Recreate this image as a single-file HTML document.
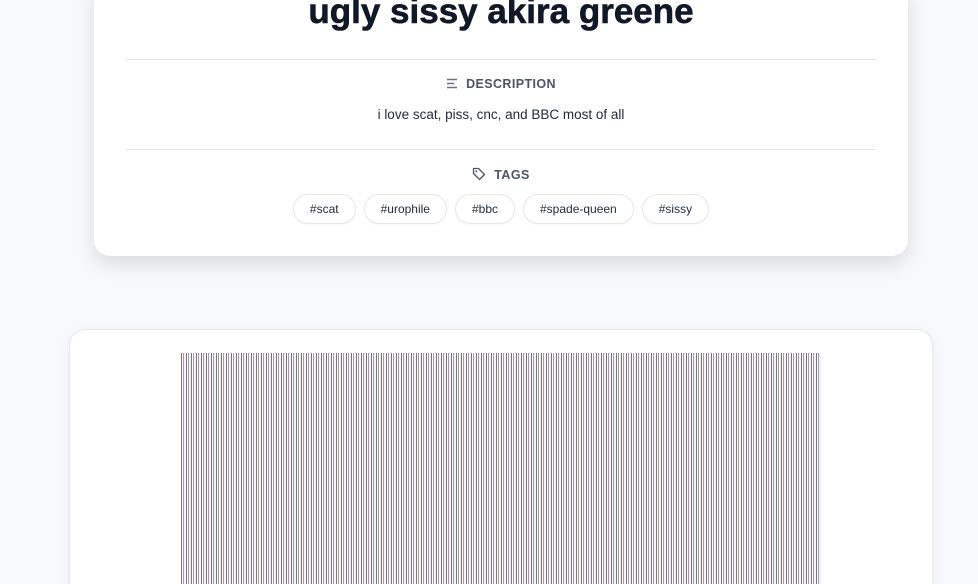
<!DOCTYPE html>
<html><head><meta charset="utf-8"><style>
html,body{margin:0;width:978px;height:584px;overflow:hidden}
body{background:#f8f9fb;font-family:"Liberation Sans",sans-serif;position:relative}
.card{position:absolute;left:94px;top:-20px;width:814px;height:276px;background:#fff;border-radius:16px;box-shadow:0 8px 20px rgba(0,0,0,.12)}
h1{position:absolute;left:0;right:0;top:12px;margin:0;text-align:center;font-size:35px;line-height:40px;font-weight:900;color:#111827;letter-spacing:0;-webkit-text-stroke:0.6px #111827}
.hr{position:absolute;left:32px;right:32px;height:1px;background:#e5e7eb}
.lbl{position:absolute;left:0;right:0;text-align:center;font-size:12.5px;font-weight:bold;color:#4b5563;letter-spacing:.4px}
.desc{position:absolute;left:0;right:0;top:127px;text-align:center;font-size:13.5px;color:#1f2937}
.tags{position:absolute;left:0;right:0;top:214px;display:flex;justify-content:center;gap:8px}
.tag{border:1px solid #e5e7eb;border-radius:15px;height:28px;line-height:28px;padding:0 16px;font-size:12px;color:#1f2937;box-shadow:0 1px 2px rgba(0,0,0,.04)}
.card2{position:absolute;left:69px;top:329px;width:862px;height:262px;background:#fff;border:1px solid #e5e7eb;border-bottom:none;border-radius:16px 16px 0 0;box-shadow:0 4px 16px rgba(0,0,0,.05)}
.img{position:absolute;left:181px;top:353px;width:640px;height:231px;background:repeating-linear-gradient(90deg,#6f7a6c 0 1px,#fff 1px 2px,#a993b8 2px 3px,#f4f2f6 3px 5px)}
</style></head><body>
<div class="card">
<h1>ugly sissy akira greene</h1>
<div class="hr" style="top:79px"></div>
<div class="lbl" style="top:97px"><svg width="12" height="11" viewBox="0 0 12 11" style="vertical-align:-1px;margin-right:8px"><path d="M1 1.5h10M1 5.5h7M1 9.5h10" stroke="#6b7280" stroke-width="1.4"/></svg>DESCRIPTION</div>
<div class="desc">i love scat, piss, cnc, and BBC most of all</div>
<div class="hr" style="top:169px"></div>
<div class="lbl" style="top:187px"><svg width="14" height="14" viewBox="0 0 14 14" style="vertical-align:-2px;margin-right:8px"><path d="M1.5 1.5h5l6 6-5 5-6-6z" fill="none" stroke="#4b5563" stroke-width="1.3" stroke-linejoin="round"/><circle cx="4.3" cy="4.3" r="1" fill="#4b5563"/></svg>TAGS</div>
<div class="tags"><span class="tag">#scat</span><span class="tag">#urophile</span><span class="tag">#bbc</span><span class="tag">#spade-queen</span><span class="tag">#sissy</span></div>
</div>
<div class="card2"></div>
<div class="img"></div>
</body></html>
